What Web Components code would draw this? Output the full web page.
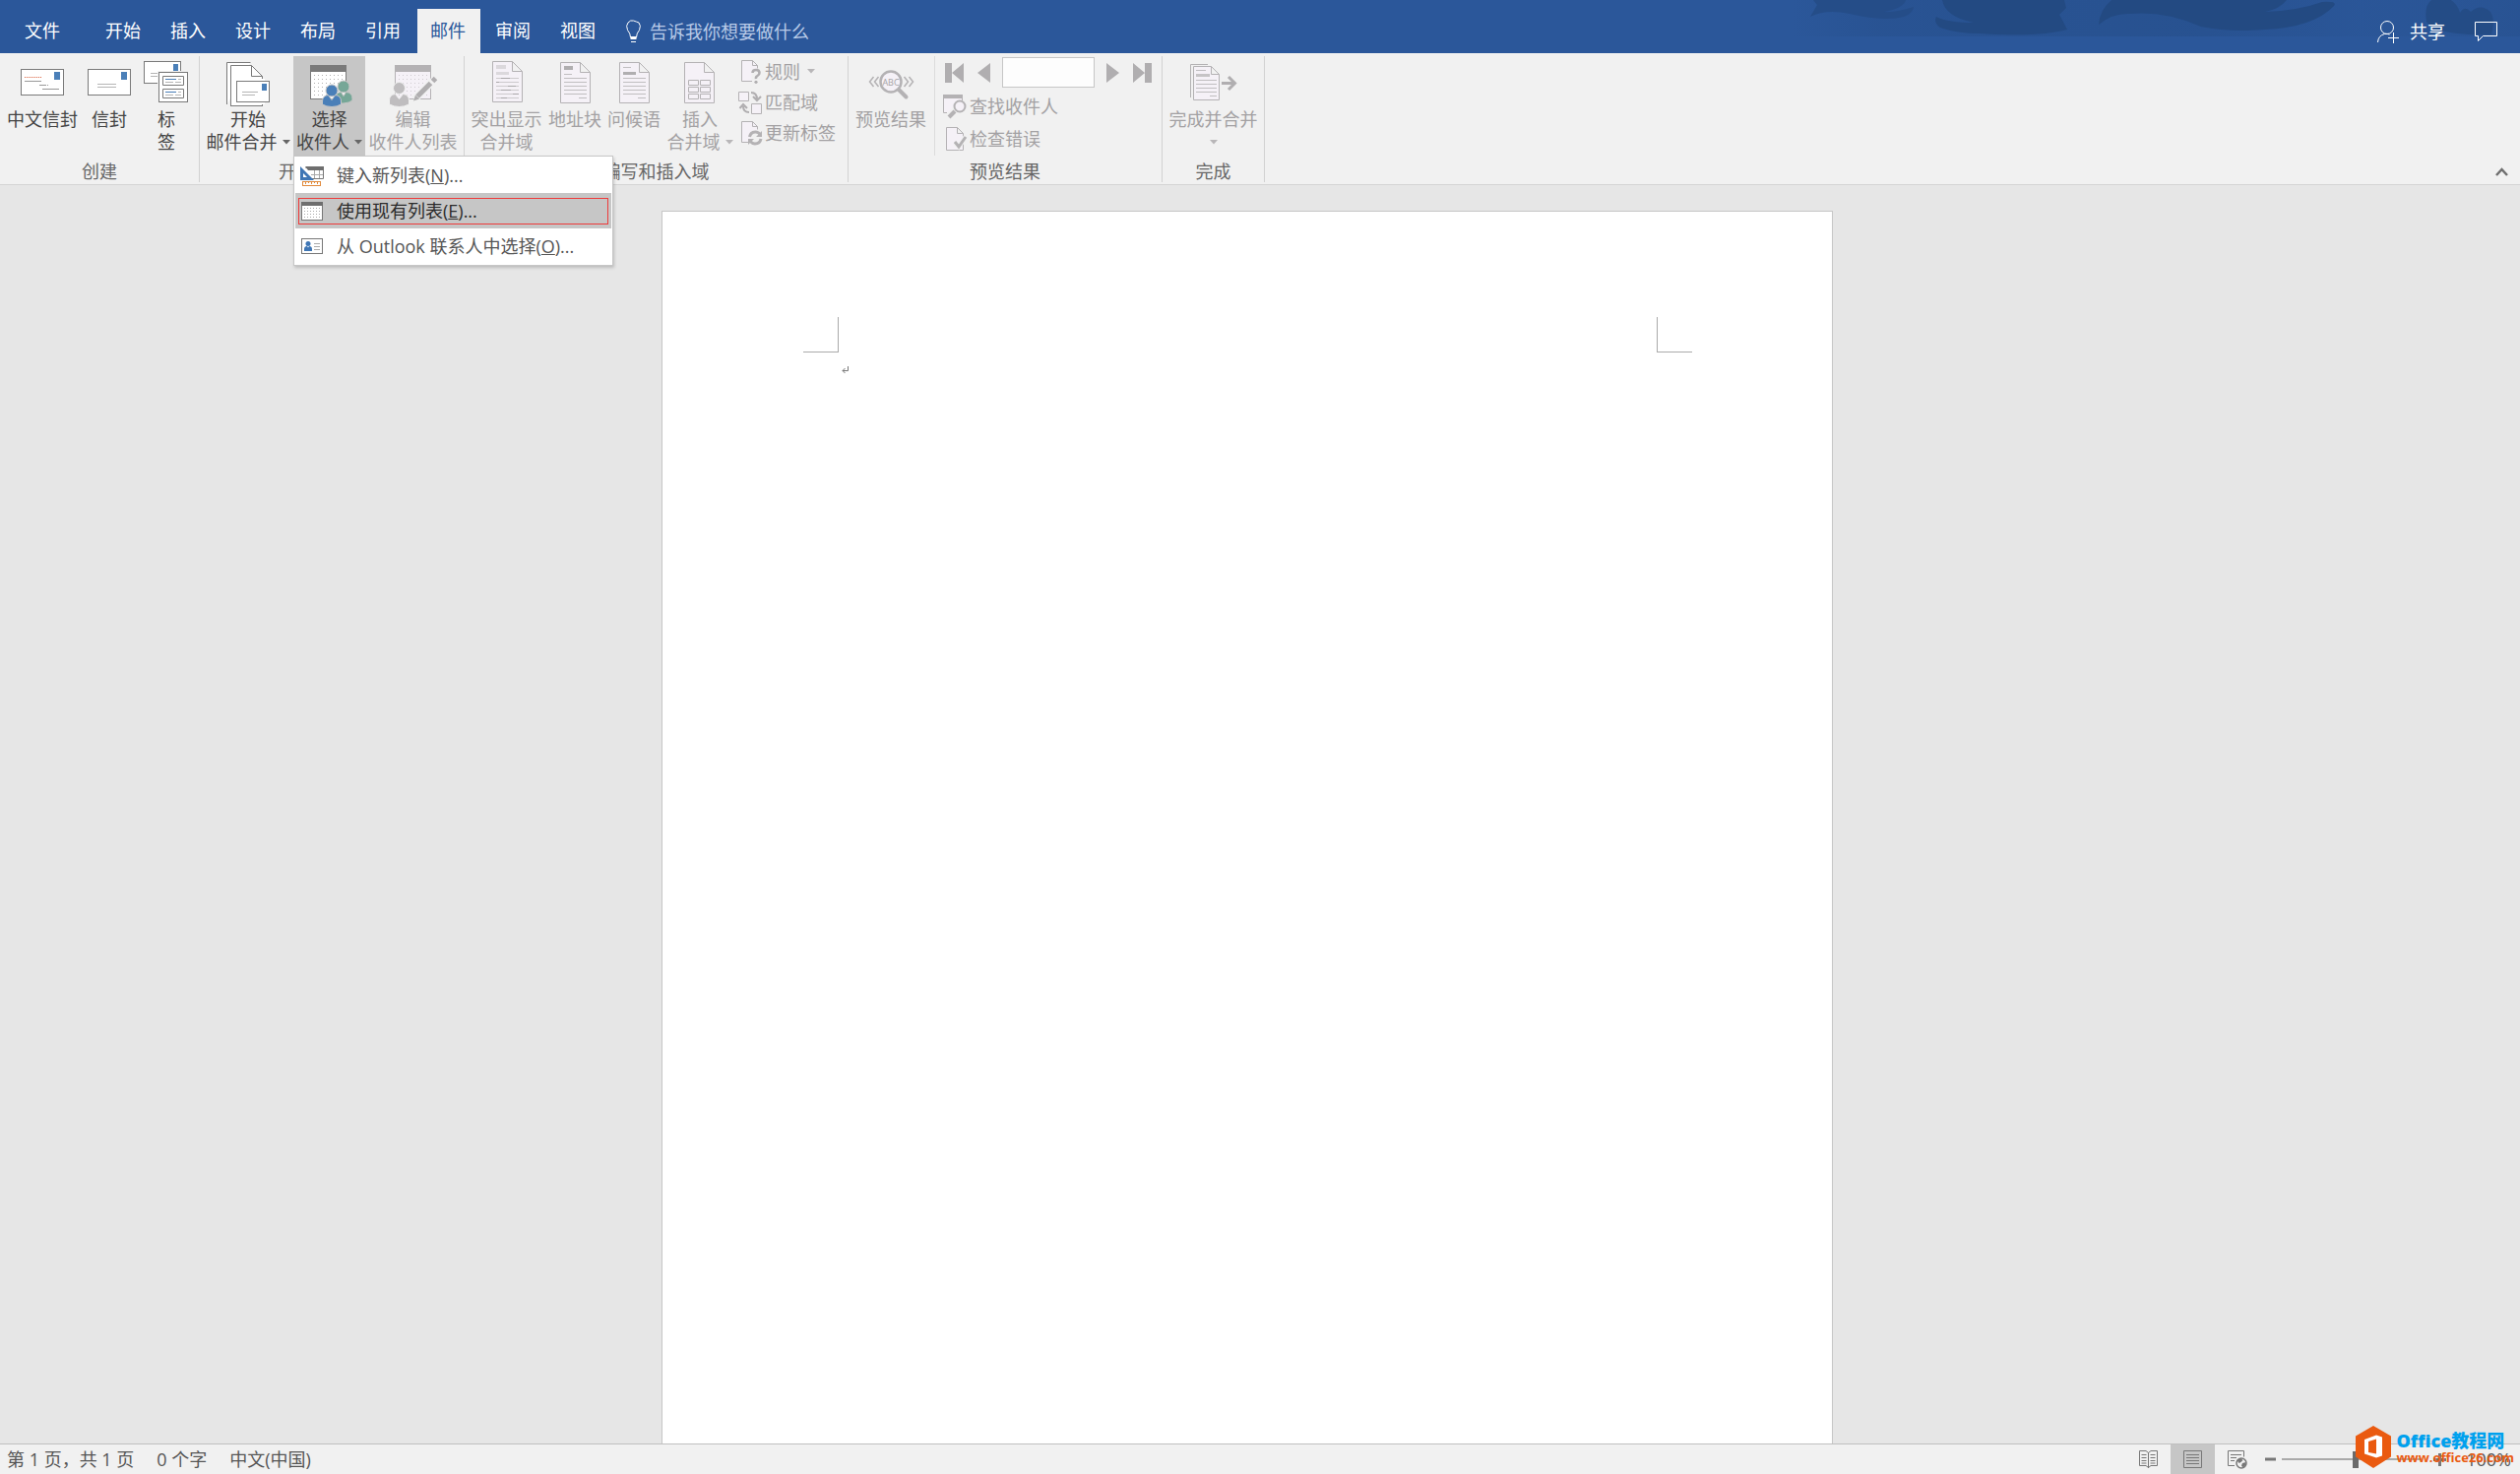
<!DOCTYPE html>
<html lang="zh-CN">
<head>
<meta charset="utf-8">
<title>Word</title>
<style>
html, body { height: 100%; margin: 0; }
body { font: 18px/22px "Open Sans", "Noto Sans CJK SC", sans-serif; color: #444; background: #e6e6e6; }
</style>
</head>
<body>
<word-app>
  <title-bar slot="top">
    <ribbon-tab kind="file">文件</ribbon-tab>
    <ribbon-tab>开始</ribbon-tab>
    <ribbon-tab>插入</ribbon-tab>
    <ribbon-tab>设计</ribbon-tab>
    <ribbon-tab>布局</ribbon-tab>
    <ribbon-tab>引用</ribbon-tab>
    <ribbon-tab kind="active">邮件</ribbon-tab>
    <ribbon-tab>审阅</ribbon-tab>
    <ribbon-tab>视图</ribbon-tab>
  </title-bar>

  <ribbon-bar slot="top">
    <ribbon-group label="创建">
      <big-button style="--w:80px" line1="中文信封">
        <svg viewBox="0 0 48 50"><rect x="2.5" y="10.5" width="43" height="26" fill="#fff" stroke="#7a7a7a"/><path fill="#4a7fb8" d="M36 13h6v8h-6z"/><path stroke="#d9603c" stroke-dasharray="1 1" d="M6 18.5h18"/><path stroke="#999" d="M6 22.5h17M21 26.5h7M29 26.5h1M24 30.5h17"/></svg>
      </big-button>
      <big-button style="--w:56px" line1="信封">
        <svg viewBox="0 0 48 50"><rect x="2.5" y="10.5" width="43" height="26" fill="#fff" stroke="#7a7a7a"/><path fill="#4a7fb8" d="M36 13h6v8h-6z"/><path stroke="#b5b5b5" d="M12 25.5h19M12 28.5h19"/></svg>
      </big-button>
      <big-button style="--w:60px" line1="标" line2="签">
        <svg viewBox="0 0 48 50"><rect x="1.5" y="2.5" width="37" height="22" fill="#fff" stroke="#7a7a7a"/><path fill="#4a7fb8" d="M31 5h5v7h-5z"/><path stroke="#b5b5b5" d="M8 14.5h8M8 17.5h8"/><path fill="#f1f1f1" d="M15 12h33v34H15z"/><rect x="16.5" y="13.5" width="29" height="30" fill="#fff" stroke="#7a7a7a"/><path fill="none" stroke="#7a7a7a" d="M20.500 17.500h21v9h-21zM20.500 30.500h21v9h-21z"/><path stroke="#4a7fb8" d="M23 20.500h11M23 33.500h11"/><path stroke="#b5b5b5" d="M36 20.500h3M36 33.500h3M23 23.500h8M33 23.500h6M23 36.500h8M33 36.500h6"/></svg>
      </big-button>
    </ribbon-group>

    <ribbon-group label="开始邮件合并">
      <big-button style="--w:92px" line1="开始" line2="邮件合并" arrow>
        <svg viewBox="0 0 48 50"><path fill="#fff" stroke="#7a7a7a" d="M26.500 3.500h-24v42.500"/><path fill="#fff" stroke="#7a7a7a" d="M6.500 6.500h21l11 11v30h-32z"/><path fill="none" stroke="#7a7a7a" d="M27.500 6.500v11h11"/><path fill="#fff" d="M11 20h30v26h-30z"/><rect x="12.500" y="22.500" width="33" height="21" fill="#fff" stroke="#7a7a7a"/><path stroke="#7a7a7a" d="M6 47.500h33"/><path fill="#4a7fb8" d="M38 25h5v7h-5z"/><path stroke="#b5b5b5" d="M18 33.500h16M18 36.500h13"/></svg>
      </big-button>
      <menu-anchor>
        <big-button style="--w:73px" line1="选择" line2="收件人" arrow pressed>
          <svg viewBox="0 0 48 50"><rect x="4.500" y="6.500" width="36" height="34" fill="#fff" stroke="#7a7a7a"/><path fill="#7a7a7a" d="M4 6h37v7H4z"/><path stroke="#b0b0b0" stroke-dasharray="1 3" d="M8 16.500h31M8 20.500h31M8 24.500h31M8 28.500h31M8 32.500h31M8 36.500h31"/><g fill="#76a797" stroke="#c6c6c6"><path d="M29.500 45v-5q0-6 6-6.500l2.500 4 2.500-4q6.500.5 6.500 6.500v2q-3 2.500-9 3z"/><circle cx="38" cy="28" r="6"/></g><g fill="#4a7fb8" stroke="#c6c6c6"><path d="M16.500 46v-3q0-6 6-6.500l3.500 5 3.500-5q6 .5 6 6.500v3q-4 2.500-9.500 2.500T16.500 46z"/><circle cx="26" cy="32" r="6"/></g></svg>
        </big-button>
        <drop-menu slot="menu">
          <menu-item>
            <svg slot="icon" viewBox="0 0 24 24"><path fill="#fff" stroke="#777" d="M5.500 4.500h18v11h-12"/><path fill="#6e6e6e" d="M5 3h19v4H8z"/><path stroke="#aaa" fill="none" d="M11 11.500h12M14.500 7v8M19.500 7v8"/><path fill="#3f76b5" d="M0 3l14 14H0z"/><path fill="#fff" d="M3 10l4 4H3z"/><rect x="2.500" y="18.500" width="18" height="4" fill="#fff" stroke="#e08a3c"/><path stroke="#e08a3c" d="M5.500 18v3M8.500 18v2M11.500 18v3M14.500 18v2M17.500 18v3"/></svg>
            键入新列表(<u>N</u>)...
          </menu-item>
          <menu-item current>
            <svg slot="icon" viewBox="0 0 24 24"><rect x="1.500" y="3.500" width="21" height="18" fill="#fff" stroke="#777"/><path fill="#6e6e6e" d="M1 3h22v4H1z"/><path stroke="#aaa" stroke-dasharray="1 2" d="M4 9.500h16M4 12.500h16M4 15.500h16M4 18.500h16"/></svg>
            使用现有列表(<u>E</u>)...
          </menu-item>
          <menu-item>
            <svg slot="icon" viewBox="0 0 24 24"><rect x="1.500" y="4.500" width="21" height="15" fill="#fff" stroke="#777"/><circle cx="8" cy="9.500" r="2.500" fill="#3f76b5"/><path fill="#3f76b5" d="M4 17v-2q0-3 3-3l1 1.500 1-1.500q3 0 3 3v2z"/><path stroke="#aaa" d="M14 9.500h6M14 12.500h6M14 15.500h6"/></svg>
            从 Outlook 联系人中选择(<u>O</u>)...
          </menu-item>
        </drop-menu>
      </menu-anchor>
      <big-button style="--w:97px" line1="编辑" line2="收件人列表" off>
        <svg viewBox="0 0 48 50"><rect x="5.500" y="6.500" width="36" height="34" fill="#f5f1f7" stroke="#b4b2b4"/><path fill="#b4b2b4" d="M5 6h37v7H5z"/><path stroke="#cfcbd0" stroke-dasharray="1 3" d="M9 16.500h31M9 20.500h31M9 24.500h31M9 28.500h31M9 32.500h31M9 36.500h31"/><g fill="#bfbdbf" stroke="#f1f1f1"><path d="M-.5 46v-4q0-6 6-6.500l4 5 4-5q6 .5 6 6.500v4q-5 2.500-10 2.500T-.5 46z"/><circle cx="9.500" cy="29.500" r="6"/></g><path stroke="#f1f1f1" stroke-width="8" d="M44 22L25 41"/><path stroke="#b0aeb0" stroke-width="5" d="M46.500 19.500l-3 3M41.500 24.500L28 38"/><path fill="#b0aeb0" d="M26 36.500l4 4-6 2z"/></svg>
      </big-button>
    </ribbon-group>

    <ribbon-group label="编写和插入域">
      <big-button style="--w:79px" line1="突出显示" line2="合并域" off>
        <svg viewBox="0 0 48 50"><path fill="#f5f1f7" stroke="#b4b2b4" d="M9.500 2.500h20l10 10v31h-30zM29.500 2.500v10h10"/><path fill="#dbd8dc" d="M13 6h10v4H13zM13 13h13v3H13z"/><path stroke="#cdcacd" d="M13 19.500h23M13 23.500h23M13 27.500h23M13 31.500h23M13 35.500h23M13 39.500h23"/><path stroke="#aaa8aa" d="M18 19.500h9M13 23.500h3M25 27.500h8M18 31.500h10M30 35.500h6M18 39.500h6"/></svg>
      </big-button>
      <big-button style="--w:60px" line1="地址块" off>
        <svg viewBox="0 0 48 50"><path fill="#f5f1f7" stroke="#b4b2b4" d="M9.500 3.500h20l10 10v31h-30zM29.500 3.500v10h10"/><path fill="#b0aeb0" d="M13 7h9v4h-9z"/><path stroke="#c0bec0" d="M13 15.500h8M13 19.500h23M13 23.500h23M13 27.500h23M13 31.500h23M13 35.500h23M28 39.500h8"/></svg>
      </big-button>
      <big-button style="--w:60px" line1="问候语" off>
        <svg viewBox="0 0 48 50"><path fill="#f5f1f7" stroke="#b4b2b4" d="M9.500 3.500h20l10 10v31h-30zM29.500 3.500v10h10"/><path fill="#b0aeb0" d="M13 13h13v3H13z"/><path stroke="#c0bec0" d="M13 8.500h8M13 19.500h23M13 23.500h23M13 27.500h23M13 31.500h23M13 35.500h23M28 39.500h8"/></svg>
      </big-button>
      <big-button style="--w:74px" line1="插入" line2="合并域" arrow off>
        <svg viewBox="0 0 48 50"><path fill="#f5f1f7" stroke="#b4b2b4" d="M8.500 3.500h20l10 10v31h-30zM28.500 3.500v10h10"/><path fill="none" stroke="#b4b2b4" d="M12.500 21.500h10v5h-10zM24.500 21.500h10v5h-10zM12.500 28.500h10v5h-10zM24.500 28.500h10v5h-10zM12.500 35.500h10v5h-10zM24.500 35.500h10v5h-10z"/></svg>
      </big-button>
      <tool-column style="--row:31px">
        <small-button arrow label="规则"><svg viewBox="0 0 24 24"><path fill="#f5f1f7" d="M3.500.500h11l5 5v4h-6v12h-10z"/><path fill="none" stroke="#b4b2b4" d="M14 21.500H3.500V.500h11l5 5v3M14.500.500v5h5"/><path fill="none" stroke="#b0aeb0" stroke-width="2.500" d="M14.500 13q0-3 3.500-3t3.500 3q0 2-2 3t-1.500 3"/><circle cx="18" cy="22.300" r="1.600" fill="#b0aeb0"/></svg></small-button>
        <small-button label="匹配域"><svg viewBox="0 0 24 24"><path fill="#f5f1f7" stroke="#b4b2b4" d="M.500 1.500h10v9H.500zM13.500 13.500h10v10h-10z"/><path fill="none" stroke="#b0aeb0" stroke-width="2" d="M13 2q6 0 6 7M15 6l4 4 4-4M11 22q-6 0-6-6M1.500 18L5 14l4 4"/></svg></small-button>
        <small-button label="更新标签"><svg viewBox="0 0 24 24"><path fill="#f5f1f7" d="M3.500.500h11l5 5v4h-6v12h-10z"/><path fill="none" stroke="#b4b2b4" d="M10 21.500H3.500V.500h11l5 5v3M14.500.500v5h5"/><path fill="none" stroke="#b4b2b4" stroke-width="3" d="M11.500 16q1-5 6-5 3 0 5 3M23 18q-1 5-6 5-3 0-5-3"/><path fill="#b4b2b4" d="M24 10v6h-6zM10 24v-6h6z"/></svg></small-button>
      </tool-column>
    </ribbon-group>

    <ribbon-group label="预览结果">
      <big-button style="--w:80px" line1="预览结果" off>
        <svg viewBox="0 0 48 50"><path fill="none" stroke="#b4b2b4" stroke-width="1.500" d="M6.500 18l-4 5 4 5M11.500 18l-4 5 4 5M37.500 18l4 5-4 5M42.500 18l4 5-4 5"/><circle cx="24" cy="23" r="10.500" fill="#f5f1f7" stroke="#b4b2b4" stroke-width="2.500"/><path stroke="#b4b2b4" stroke-width="4" stroke-linecap="round" d="M32.500 31.500l7 7"/><text x="24" y="26.500" font-size="9" text-anchor="middle" fill="#a5a3a5">ABC</text></svg>
      </big-button>
      <tool-column divided style="--row:34px">
        <record-nav></record-nav>
        <small-button label="查找收件人"><svg viewBox="0 0 24 24"><path fill="#f5f1f7" stroke="#b4b2b4" d="M4 18.500H.500v-17h19V6"/><path fill="#b4b2b4" d="M0 0h20v4H0z"/><path stroke="#b4b2b4" stroke-width="4" d="M12 17l-6 6"/><circle cx="17" cy="12" r="5.500" fill="#f5f1f7" stroke="#b4b2b4" stroke-width="2"/></svg></small-button>
        <small-button label="检查错误"><svg viewBox="0 0 24 24"><path fill="#f5f1f7" stroke="#b4b2b4" d="M3.500.500h11l6 6v17h-17zM14.500.500v6h6"/><path fill="none" stroke="#f1f1f1" stroke-width="5" d="M12 16l4 4 7-10"/><path fill="none" stroke="#b4b2b4" stroke-width="3" d="M12 15l4 5 7-10"/></svg></small-button>
      </tool-column>
    </ribbon-group>

    <ribbon-group label="完成">
      <big-button style="--w:97px" line1="完成并合并" arrow off>
        <svg viewBox="0 0 48 50"><path fill="none" stroke="#b4b2b4" d="M18 5.500H.500V39"/><path fill="#f5f1f7" stroke="#b4b2b4" d="M3.500 7.500h18l8 8v26h-26zM21.500 7.500v8h8"/><path fill="#c6c4c6" d="M6 15h14v3H6z"/><path stroke="#c0bec0" d="M6 11.500h10M6 21.500h21M6 25.500h21M6 29.500h21M6 33.500h21M20 37.500h7"/><path fill="none" stroke="#b0aeb0" stroke-width="3" d="M32 24.500h13M39 18l6.500 6.500L39 31"/></svg>
      </big-button>
    </ribbon-group>
  </ribbon-bar>

  <doc-area></doc-area>
  <status-bar slot="bottom"></status-bar>
  <site-mark slot="mark"></site-mark>
</word-app>

<script>
const BASE = `<style>
:host,*{box-sizing:border-box}
button{font:inherit;color:inherit;background:none;border:0;padding:0;margin:0}
svg{display:block}
</style>`;

function element(tag, html, ready) {
  const template = document.createElement('template');
  customElements.define(tag, class extends HTMLElement {
    constructor() { super(); this.attachShadow({ mode: 'open' }); }
    connectedCallback() {
      if (this.shadowRoot.childNodes.length) return;
      template.innerHTML = BASE + (typeof html === 'function' ? html(this) : html);
      this.shadowRoot.append(template.content.cloneNode(true));
      if (ready) ready(this);
    }
  });
}

element('word-app', `<style>
:host{display:flex;flex-direction:column;height:100vh;overflow:hidden;position:relative}
main{flex:1;min-height:0;display:flex}
main ::slotted(*){flex:1}
</style><slot name="top"></slot><main><slot></slot></main><slot name="bottom"></slot><slot name="mark"></slot>`);

element('title-bar', `<style>
:host{display:flex;justify-content:space-between;height:54px;padding-top:9px;background:#2b579a;color:#fff;position:relative}
.art{position:absolute;right:0;top:0;width:740px;height:37px}
nav{display:flex;gap:2px}
.tell{display:flex;align-items:center;gap:8px;margin-left:13px;padding-top:1px}
input{font:inherit;background:none;border:0;outline:0;padding:0;width:240px;color:#fff}
input::placeholder{color:#b9cbe8;opacity:1}
.right{display:flex;align-items:center;gap:30px;padding-right:23px;position:relative}
.share{display:flex;align-items:center;gap:11px}
</style>
<svg class="art" viewBox="0 0 740 37" aria-hidden="true">
<defs><linearGradient id="g"><stop offset="0" stop-color="#234a82" stop-opacity="0"/><stop offset=".12" stop-color="#234a82" stop-opacity=".3"/><stop offset=".55" stop-color="#234a82" stop-opacity=".4"/><stop offset=".78" stop-color="#234a82" stop-opacity=".1"/><stop offset=".9" stop-color="#234a82" stop-opacity=".15"/><stop offset="1" stop-color="#234a82" stop-opacity=".3"/></linearGradient></defs>
<path fill="url(#g)" d="M0 0h740v37H0z"/>
<path fill="#254d88" d="M22 0l4 5-7 12q16-8 40-3 34 8 55 3 9-3 10-10-18 6-30 5 20-4 22-12z"/>
<path fill="#234a82" d="M153 0q3 17 32 23-26 0-38-6-3 6 4 11 17 6 40 6 60 4 89-4-5-10-8-15l7-7-2-8zM325 0q-12 10-13 25 14-12 32-11 36-3 72 13 30 6 64 3 50-2 71-24 4-5-12-4-25 9-58 10 15-3 22-12z"/>
<path fill="#244c86" d="M645 22q-4-25 16-25 14 2 18 16 5-8 11-1 10-9 20 0 5 8 1 23-35 1-50-4-12-3-16-9z"/>
</svg>
<nav role="tablist"><slot></slot>
<label class="tell"><svg width="17" height="24" viewBox="0 0 17 24" fill="none" stroke="#fff"><path d="M5.500 18q0-4-3-7.500Q.5 6 3 3t5.500-2T14 3q2.500 3 .5 7.500-3 3.500-3 7.500z"/><path stroke-width="3" d="M5.500 18.500h6"/><path d="M6 22.500h5"/></svg><input type="text" aria-label="告诉我你想要做什么" placeholder="告诉我你想要做什么"></label></nav>
<div class="right"><button class="share"><svg width="22" height="24" viewBox="0 0 22 24" fill="none" stroke="#fff"><circle cx="10" cy="8" r="6.500"/><path d="M.5 23q.5-7 7-8.500 3-.5 5 .5M16.500 13v11M11 18.500h11"/></svg>共享</button>
<button aria-label="批注"><svg width="23" height="22" viewBox="0 0 23 22" fill="none" stroke="#fff"><path d="M.5 1.500h22v14H8.500l-5 5v-5h-3z"/></svg></button></div>`);

element('ribbon-tab', `<style>
:host{display:block}
button{height:45px;width:64px;padding:0 15px 2px 13px;white-space:nowrap}
:host([kind=file]) button{width:92px;padding:0 31px 2px 25px}
:host([kind=active]) button{background:#f1f1f1;color:#2b579a}
</style><button role="tab"><slot></slot></button>`);

element('ribbon-bar', `<style>
:host{display:flex;background:#f1f1f1;border-bottom:1px solid #d5d5d5;padding:3px 0 2px;position:relative;z-index:2}
.fold{margin-left:auto;align-self:flex-end;padding:0 12px 6px}
</style><slot></slot><button class="fold" aria-label="折叠功能区"><svg width="13" height="9" viewBox="0 0 13 9"><path fill="none" stroke="#6f6f6f" stroke-width="2.500" d="M1 8l5.500-6L12 8"/></svg></button>`);

element('ribbon-group', el => `<style>
:host{display:block;border-right:1px solid #d2d2d2}
.row{display:flex;height:101px;padding:0 3px}
.name{padding-top:5px;line-height:22px;text-align:center;color:#666}
</style><div class="row"><slot></slot></div><div class="name">${el.getAttribute('label')}</div>`);

const ARROW = '<svg class="arrow" width="8" height="5" viewBox="0 0 8 5"><path fill="currentColor" d="M0 0h8L4 4.500z"/></svg>';

element('big-button', el => `<style>
:host{display:block;width:var(--w)}
button{display:flex;flex-direction:column;align-items:center;width:100%;height:101px;padding-top:3px;line-height:23px;white-space:nowrap}
button:disabled{color:#a3a1a3}
:host([pressed]) button{background:#c6c6c6}
::slotted(svg){display:block;width:48px;height:50px;flex:none;overflow:visible}
.two{display:flex;align-items:center;gap:5px;height:23px}
.arrow{color:#666}
button:disabled .arrow{color:#b8b6b8}
</style><button ${el.hasAttribute('off') ? 'disabled' : ''}><slot></slot><span>${el.getAttribute('line1')}</span><span class="two">${el.getAttribute('line2') || ''}${el.hasAttribute('arrow') ? ARROW : ''}</span></button>`);

element('small-button', el => `<style>
:host{display:flex;align-items:center;height:var(--row)}
button{display:flex;align-items:center;gap:3px;color:#a3a1a3;white-space:nowrap}
::slotted(svg){display:block;width:24px;height:24px;overflow:visible}
.arrow{color:#b8b6b8;margin-left:4px}
</style><button disabled><slot></slot>${el.getAttribute('label')}${el.hasAttribute('arrow') ? ARROW : ''}</button>`);

element('tool-column', `<style>
:host{display:flex;flex-direction:column;padding:0 9px 0 2px}
:host([divided]){border-left:1px solid #dcdcdc;margin-left:4px;padding:0 7px 0 8px}
</style><slot></slot>`);

element('record-nav', `<style>
:host{display:flex;align-items:center;height:var(--row);padding-left:2px}
input{width:94px;height:31px;border:1px solid #c6c6c6;background:#fdfdfd;margin:0 12px;font:inherit}
button{color:#b0aeb0}
.gap{margin-left:14px}
svg{fill:currentColor}
</style>
<button disabled aria-label="首记录"><svg width="19" height="20"><path d="M0 0h7v20H0zM19 0v20L7 10z"/></svg></button>
<button disabled class="gap" aria-label="上一记录"><svg width="13" height="20"><path d="M13 0v20L0 10z"/></svg></button>
<input type="text" aria-label="记录">
<button disabled aria-label="下一记录"><svg width="13" height="20"><path d="M0 0v20l13-10z"/></svg></button>
<button disabled class="gap" aria-label="尾记录"><svg width="19" height="20"><path d="M12 0h7v20h-7zM0 0v20l12-10z"/></svg></button>`);

element('menu-anchor', `<style>
:host{display:block;position:relative}
::slotted([slot=menu]){position:absolute;top:101px;left:0;z-index:5}
</style><slot></slot><slot name="menu"></slot>`);

element('drop-menu', `<style>
:host{display:block;width:325px;padding:1px;background:#fff;border:1px solid #c6c6c6;box-shadow:1px 2px 3px rgba(0,0,0,.18)}
</style><div role="menu"><slot></slot></div>`);

element('menu-item', `<style>
:host{display:block}
button{display:flex;align-items:center;width:100%;height:36px;padding-left:5px;color:#555;position:relative;white-space:nowrap}
.text{margin-left:13px}
::slotted(svg){display:block;width:24px;height:24px}
:host([current]) button{background:#c6c6c6;color:#2b2b2b}
:host([current]) button::after{content:"";position:absolute;inset:5px 3px 4px;border:1px solid #ee3b3b}
</style><button role="menuitem"><slot name="icon"></slot><span class="text"><slot></slot></span></button>`);

element('doc-area', `<style>
:host{display:flex;justify-content:center;background:#e6e6e6;padding:26px 27px 0 0;min-height:0}
article{width:1190px;background:#fff;border:1px solid #c6c6c6;border-bottom:0;padding:107px 142px 0 143px}
.margins{display:flex;justify-content:space-between}
i{width:36px;height:36px;border:solid #aaa;border-width:0 1px 1px 0}
i+i{border-width:0 0 1px 1px}
p{margin:0;padding:14px 0 0 39px}
</style><article><div class="margins"><i></i><i></i></div><p><svg width="8" height="8" viewBox="0 0 8 8"><path fill="none" stroke="#777" d="M6.500 0v4.500H1M3.500 2l-2.500 2.500L3.500 7"/></svg></p></article>`);

element('status-bar', `<style>
:host{display:flex;justify-content:space-between;height:31px;background:#f1f1f1;border-top:1px solid #c0c0c0;color:#555;white-space:nowrap;position:relative}
div{display:flex;align-items:center}
.left{gap:23px;padding-left:7px}
.view{width:45px;height:30px;display:grid;place-items:center}
.on{background:#c6c6c6}
.zoom{padding:0 9px 0 6px}
input{appearance:none;width:142px;height:18px;margin:0 12px 0 6px;background:linear-gradient(#aaa,#aaa) center/100% 2px no-repeat}
input::-webkit-slider-thumb{appearance:none;width:6px;height:17px;background:#6a6a6a}
.pct{margin-left:20px}
svg{fill:none;stroke:#777}
</style>
<div class="left"><span>第 1 页，共 1 页</span><span>0 个字</span><span>中文(中国)</span></div>
<div>
<button class="view" aria-label="阅读视图"><svg width="20" height="18" viewBox="0 0 20 18"><path d="M9.500 2.500L7 .5H.5v15H7l2.500 2 2.500-2h6.500V.5H12zM9.500 2v16M2.500 4.500h5M2.500 7.500h5M2.500 10.500h5M2.500 13h5M11.500 4.500h5M11.500 7.500h5M11.500 10.500h5M11.500 13h5"/></svg></button>
<button class="view on" aria-label="页面视图"><svg width="19" height="18" viewBox="0 0 19 18"><path d="M.5.5h18v17H.5zM3 4.500h13M3 7.500h13M3 10.500h13M3 13.500h13"/></svg></button>
<button class="view" aria-label="Web 版式视图"><svg width="20" height="19" viewBox="0 0 20 19"><path d="M7 15.500H.5V.5h16v6M3 4.500h11M3 7.500h6M3 10.500h4"/><circle cx="14" cy="13" r="5" fill="#f1f1f1" stroke-width="1.500"/><path fill="#777" stroke="none" d="M9.500 10l4-2 2 2-2 2-2 1zM15 13l3.500-1q0 4-3 5.500l-1.500-2z"/></svg></button>
</div>`, el => {
  const right = el.shadowRoot.querySelectorAll('div')[1];
  const zoom = document.createElement('div');
  zoom.className = 'zoom';
  zoom.innerHTML = `<button aria-label="缩小"><svg width="11" height="4"><path stroke-width="3" d="M0 2h11"/></svg></button>
<input type="range" aria-label="缩放" min="0" max="100" value="53">
<button aria-label="放大"><svg width="13" height="13"><path stroke-width="3" d="M0 6.500h13M6.500 0v13"/></svg></button><span class="pct">100%</span>`;
  right.append(zoom);
});

element('site-mark', `<style>
:host{display:flex;align-items:center;gap:5px;position:absolute;right:6px;bottom:6px;z-index:9;font-weight:700}
.words{display:flex;flex-direction:column}
b{font-size:18px;line-height:20px;color:#00a1ee}
a{font-size:13px;line-height:14px;color:#ea5b12;text-decoration:none}
</style>
<svg width="36" height="43" viewBox="0 0 36 43"><path fill="#ea5a10" d="M18 0l18 10.500v21L18 43 0 31.500v-21z"/><path fill="#fff" d="M9 14l12-4.500 6 2v19l-6 2-12-4zM13 16v11l8 1.500v-15z" fill-rule="evenodd"/></svg>
<div class="words"><b>Office教程网</b><a href="#">www.office26.com</a></div>`);
</script>
</body>
</html>
